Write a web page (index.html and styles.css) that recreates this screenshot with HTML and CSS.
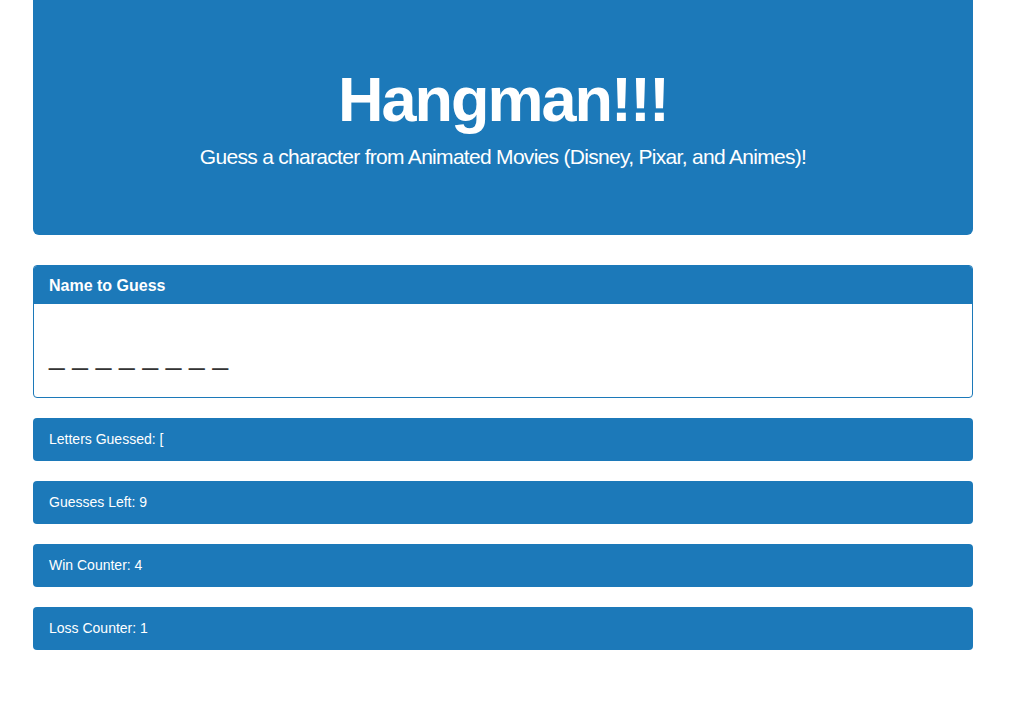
FILE: index.html
```html
<!DOCTYPE html>
<html lang="en">
<head>
<meta charset="utf-8">
<title>Hangman!!!</title>
<link rel="stylesheet" href="styles.css">
</head>
<body>
<div class="page">
  <header class="jumbotron">
    <h1 class="title">Hangman!!!</h1>
    <p class="lead">Guess a character from Animated Movies (Disney, Pixar, and Animes)!</p>
  </header>

  <section class="panel">
    <div class="panel-heading">Name to Guess</div>
    <div class="panel-body">
      <div class="blanks">_ _ _ _ _ _ _ _</div>
    </div>
  </section>

  <div class="stat">Letters Guessed: [</div>
  <div class="stat">Guesses Left: 9</div>
  <div class="stat">Win Counter: 4</div>
  <div class="stat">Loss Counter: 1</div>
</div>
</body>
</html>
```

FILE: styles.css
```css
* { box-sizing: border-box; }

html, body {
  margin: 0;
  padding: 0;
  background: #ffffff;
}

body {
  font-family: "Liberation Sans", Arial, Helvetica, sans-serif;
  font-size: 14px;
  line-height: 1.42857;
  color: #333333;
}

.page {
  width: 940px;
  margin-left: 33px;
  display: flex;
  flex-direction: column;
}

.jumbotron {
  background: #1c79b9;
  color: #ffffff;
  text-align: center;
  height: 235px;
  padding-top: 65px;
  border-radius: 0 0 6px 6px;
  margin-bottom: 30px;
}

.title {
  margin: 0;
  font-size: 63px;
  line-height: 69px;
  font-weight: 700;
  letter-spacing: -2px;
}

.lead {
  margin: 8px 0 0;
  font-size: 21px;
  line-height: 30px;
  font-weight: 400;
  letter-spacing: -0.7px;
}

.panel {
  border: 1px solid #1c79b9;
  border-radius: 4px;
  height: 133px;
  margin-bottom: 20px;
  overflow: hidden;
}

.panel-heading {
  background: #1c79b9;
  color: #ffffff;
  font-size: 16px;
  font-weight: 700;
  line-height: 18px;
  padding: 11px 15px 9px;
  height: 38px;
}

.panel-body {
  padding: 15px 15px;
}

.blanks {
  font-size: 28px;
  line-height: 32px;
  margin-top: 20px;
  color: #333333;
  white-space: pre;
}

.stat {
  background: #1c79b9;
  color: #ffffff;
  border-radius: 4px;
  height: 43px;
  padding: 11px 16px;
  line-height: 21px;
  font-size: 14px;
  margin-bottom: 20px;
}
```
